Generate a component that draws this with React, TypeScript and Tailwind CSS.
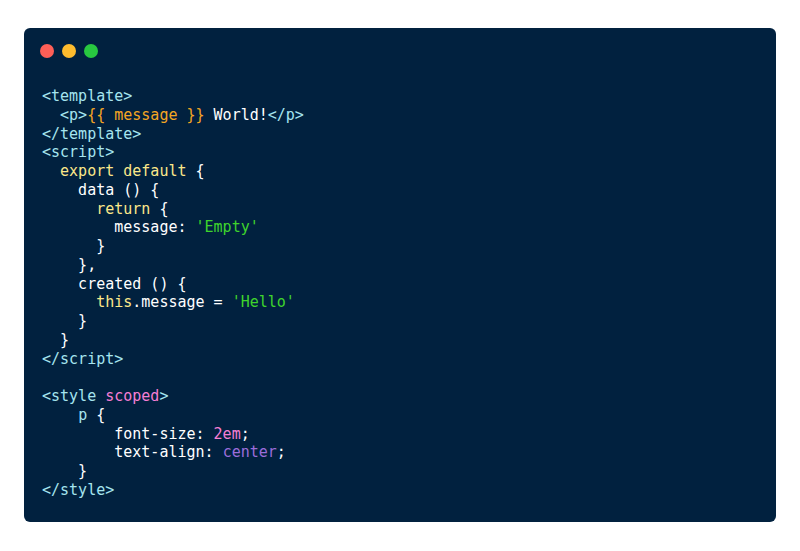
import React from "react";

const T = "text-[#a6e5ef]";
const W = "text-[#ffffff]";
const O = "text-[#f5a623]";
const Y = "text-[#fbe88a]";
const G = "text-[#3fd42c]";
const P = "text-[#f57ed4]";
const V = "text-[#9b6ddb]";

type Seg = [string, string];
const lines: Seg[][] = [
  [[T, "<template>"]],
  [[W, "  "], [T, "<p>"], [O, "{{ message }}"], [W, " World!"], [T, "</p>"]],
  [[T, "</template>"]],
  [[T, "<script>"]],
  [[W, "  "], [Y, "export default"], [W, " {"]],
  [[W, "    data () {"]],
  [[W, "      "], [Y, "return"], [W, " {"]],
  [[W, "        message: "], [G, "'Empty'"]],
  [[W, "      }"]],
  [[W, "    },"]],
  [[W, "    created () {"]],
  [[W, "      "], [Y, "this"], [W, ".message = "], [G, "'Hello'"]],
  [[W, "    }"]],
  [[W, "  }"]],
  [[T, "</script>"]],
  [[W, " "]],
  [[T, "<style "], [P, "scoped"], [T, ">"]],
  [[W, "    "], [T, "p"], [W, " {"]],
  [[W, "        font-size: "], [P, "2em"], [W, ";"]],
  [[W, "        text-align: "], [V, "center"], [W, ";"]],
  [[W, "    }"]],
  [[T, "</style>"]],
];

export default function App() {
  return (
    <div className="w-[800px] h-[551px] bg-white pt-[28px] pl-[24px]">
      <div className="w-[752px] h-[494px] bg-[#01213f] rounded-[6px] flex flex-col">
        <div className="flex gap-[8px] pl-[16px] pt-[16px]">
          <div className="w-[14px] h-[14px] rounded-full bg-[#fe5f57]" />
          <div className="w-[14px] h-[14px] rounded-full bg-[#febc2e]" />
          <div className="w-[14px] h-[14px] rounded-full bg-[#28c840]" />
        </div>
        <pre
          className="mt-[29px] pl-[18px] text-[15px] leading-[18.75px] whitespace-pre"
          style={{ fontFamily: '"DejaVu Sans Mono", monospace' }}
        >
          {lines.map((l, i) => (
            <div key={i}>
              {l.map(([c, t], j) => (
                <span key={j} className={c}>
                  {t}
                </span>
              ))}
            </div>
          ))}
        </pre>
      </div>
    </div>
  );
}
